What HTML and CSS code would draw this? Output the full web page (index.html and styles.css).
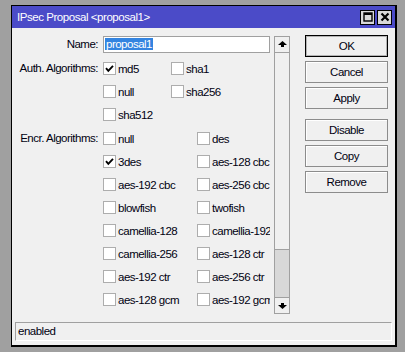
FILE: index.html
```html
<!DOCTYPE html>
<html lang="en">
<head>
  <meta charset="UTF-8" />
  <meta name="viewport" content="width=device-width, initial-scale=1.0" />
  <title>IPsec Proposal</title>
  <link rel="stylesheet" href="styles.css">
</head>
<body>
  <div class="window">
    <div class="titlebar">
      <span class="title">IPsec Proposal &lt;proposal1&gt;</span>
      <div class="tb-buttons">
        <span class="tb-btn">
          <svg width="10" height="10" viewBox="0 0 10 10"><rect x="1" y="1" width="8" height="8" fill="none" stroke="#000" stroke-width="1.4"/><rect x="1" y="1" width="8" height="2" fill="#000"/></svg>
        </span>
        <span class="tb-btn">
          <svg width="10" height="10" viewBox="0 0 10 10"><path d="M1.5 1.5 L8.5 8.5 M8.5 1.5 L1.5 8.5" stroke="#000" stroke-width="2.2"/></svg>
        </span>
      </div>
    </div>

    <div class="main">
      <div class="form">
        <div class="row name-row">
          <label class="lbl">Name:</label>
          <div class="text-input"><span class="sel">proposal1</span></div>
        </div>

        <div class="row section">
          <label class="lbl">Auth. Algorithms:</label>
          <div class="checks auth">
            <div class="chk"><span class="box on"><svg width="11" height="11" viewBox="0 0 11 11"><path d="M2 5.2 L4.3 7.8 L9 2.8" fill="none" stroke="#000" stroke-width="1.9"/></svg></span>md5</div>
            <div class="chk"><span class="box"></span>sha1</div>
            <div class="chk"><span class="box"></span>null</div>
            <div class="chk"><span class="box"></span>sha256</div>
            <div class="chk"><span class="box"></span>sha512</div>
          </div>
        </div>

        <div class="row section encr-section">
          <label class="lbl">Encr. Algorithms:</label>
          <div class="checks encr">
            <div class="chk"><span class="box"></span>null</div>
            <div class="chk"><span class="box"></span>des</div>
            <div class="chk"><span class="box on"><svg width="11" height="11" viewBox="0 0 11 11"><path d="M2 5.2 L4.3 7.8 L9 2.8" fill="none" stroke="#000" stroke-width="1.9"/></svg></span>3des</div>
            <div class="chk"><span class="box"></span>aes-128 cbc</div>
            <div class="chk"><span class="box"></span>aes-192 cbc</div>
            <div class="chk"><span class="box"></span>aes-256 cbc</div>
            <div class="chk"><span class="box"></span>blowfish</div>
            <div class="chk"><span class="box"></span>twofish</div>
            <div class="chk"><span class="box"></span>camellia-128</div>
            <div class="chk"><span class="box"></span>camellia-192</div>
            <div class="chk"><span class="box"></span>camellia-256</div>
            <div class="chk"><span class="box"></span>aes-128 ctr</div>
            <div class="chk"><span class="box"></span>aes-192 ctr</div>
            <div class="chk"><span class="box"></span>aes-256 ctr</div>
            <div class="chk"><span class="box"></span>aes-128 gcm</div>
            <div class="chk"><span class="box"></span>aes-192 gcm</div>
          </div>
        </div>
      </div>

      <div class="scrollbar">
        <div class="sb-btn">
          <svg width="9" height="7" viewBox="0 0 9 7"><polygon points="4.5,0 9,4 6,4 6,6 3,6 3,4 0,4" fill="#000"/></svg>
        </div>
        <div class="sb-thumb"></div>
        <div class="sb-track"></div>
        <div class="sb-btn down">
          <svg width="9" height="7" viewBox="0 0 9 7"><polygon points="4.5,7 9,3 6,3 6,1 3,1 3,3 0,3" fill="#000"/></svg>
        </div>
      </div>

      <div class="actions">
        <button class="btn default">OK</button>
        <button class="btn">Cancel</button>
        <button class="btn">Apply</button>
        <button class="btn group">Disable</button>
        <button class="btn">Copy</button>
        <button class="btn">Remove</button>
      </div>
    </div>

    <div class="status">enabled</div>
  </div>
</body>
</html>
```

FILE: styles.css
```css
body {
  margin: 0;
  background: #a0a0a0;
  font-family: "Liberation Sans", Arial, sans-serif;
  font-size: 11.5px;
  letter-spacing: -0.5px;
  color: #000010;
}
.window {
  margin: 5px 0 0 11px;
  width: 383px;
  background: #f0f0f0;
  border-left: 1px solid #000;
  border-top: 1px solid #000;
  border-right: 2px solid #000;
  border-bottom: 2px solid #000;
}
.titlebar {
  height: 22px;
  background: #4b4bc8;
  display: flex;
  align-items: center;
  justify-content: space-between;
  padding: 0 3px 0 5px;
}
.title {
  color: #fff;
  font-size: 11.5px;
  letter-spacing: -0.45px;
}
.tb-buttons {
  display: flex;
  gap: 2px;
}
.tb-btn {
  width: 13px;
  height: 13px;
  background: #d8d8d8;
  border: 1px solid #000;
  display: flex;
  align-items: center;
  justify-content: center;
}
.main {
  height: 294px;
  display: flex;
}
.form {
  width: 258px;
  height: 286px;
  overflow: hidden;
  padding-top: 6px;
}
.row {
  display: flex;
}
.lbl {
  width: 86px;
  flex: none;
  text-align: right;
  margin-right: 5px;
  white-space: nowrap;
  height: 23px;
  line-height: 23px;
}
.name-row {
  align-items: center;
  height: 23px;
}
.name-row .lbl {
  line-height: 21px;
}
.text-input {
  width: 164px;
  height: 15px;
  margin-top: -2px;
  background: #fff;
  border: 1px solid #a0a0a0;
  padding-left: 1px;
  line-height: 15px;
  white-space: nowrap;
}
.sel {
  background: #3384e0;
  color: #fff;
  padding: 0 1px;
}
.checks {
  display: grid;
}
.checks.auth {
  grid-template-columns: 68px 68px;
}
.checks.encr {
  grid-template-columns: 94px 94px;
}
.encr-section {
  margin-top: 1px;
}
.chk {
  height: 23px;
  display: flex;
  align-items: center;
  gap: 2px;
  white-space: nowrap;
}
.box {
  width: 11px;
  height: 11px;
  flex: none;
  background: #fff;
  border: 1px solid #adadad;
  display: flex;
}
.scrollbar {
  width: 14px;
  height: 276px;
  margin: 8px 0 0 4px;
  border: 1px solid #a0a0a0;
  display: flex;
  flex-direction: column;
}
.sb-btn {
  height: 15px;
  background: #f0f0f0;
  border-bottom: 1px solid #a0a0a0;
  display: flex;
  align-items: center;
  justify-content: center;
}
.sb-btn.down {
  border-bottom: none;
  border-top: 1px solid #a0a0a0;
}
.sb-thumb {
  height: 196px;
  background: #f0f0f0;
  border-bottom: 1px solid #a0a0a0;
}
.sb-track {
  flex: 1;
  background: #d8d8d8;
}
.actions {
  margin: 7px 0 0 15px;
  display: flex;
  flex-direction: column;
  gap: 4px;
}
.btn {
  width: 83px;
  height: 22px;
  padding: 0;
  font-family: inherit;
  font-size: 11.5px;
  letter-spacing: -0.5px;
  color: #000010;
  background: #f0f0f0;
  border: 1px solid #8c8c8c;
  box-shadow: inset 1px 1px #fff;
}
.btn.default {
  border: 1px solid #000;
  box-shadow: inset 0 0 0 1px #b4b4b4;
}
.btn.group {
  margin-top: 6px;
}
.status {
  height: 19px;
  box-sizing: border-box;
  margin: 0 3px 4px;
  border-top: 1px solid #a0a0a0;
  border-left: 1px solid #a0a0a0;
  border-right: 1px solid #fff;
  border-bottom: 1px solid #fff;
  padding-left: 2px;
  line-height: 17px;
}
```
